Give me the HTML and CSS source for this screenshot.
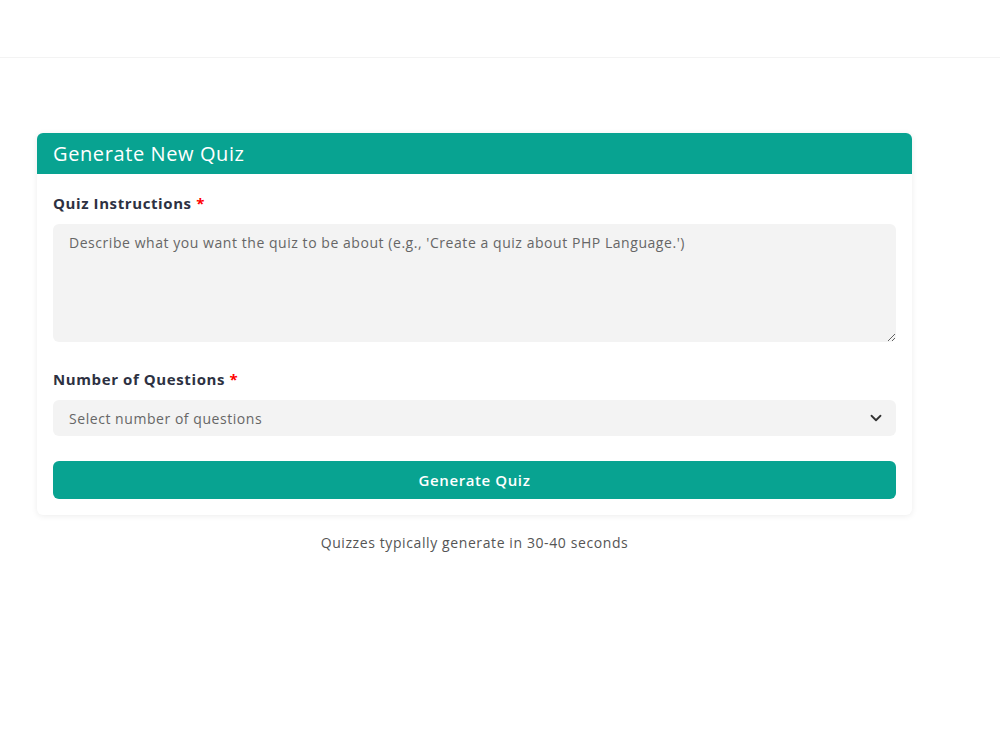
FILE: index.html
```html
<!DOCTYPE html>
<html lang="en">
  <head>
    <meta charset="UTF-8" />
    <meta name="viewport" content="width=device-width, initial-scale=1.0" />
    <title>Generate New Quiz</title>
    <link rel="stylesheet" href="styles.css">
  </head>
  <body>
    <header class="topbar"></header>

    <main class="page">
      <div class="quiz-card">
        <div class="quiz-card-header">
          <h2>Generate New Quiz</h2>
        </div>
        <form class="quiz-form" onsubmit="return false">
          <label for="instructions">Quiz Instructions <span class="req">*</span></label>
          <textarea
            id="instructions"
            placeholder="Describe what you want the quiz to be about (e.g., 'Create a quiz about PHP Language.')"
          ></textarea>

          <label for="count">Number of Questions <span class="req">*</span></label>
          <div class="select-wrap">
            <select id="count">
              <option value="" selected>Select number of questions</option>
              <option value="5">5</option>
              <option value="10">10</option>
              <option value="15">15</option>
              <option value="20">20</option>
            </select>
            <svg class="chevron" width="18" height="18" viewBox="0 0 24 24" fill="none" stroke="#333" stroke-width="2.4" stroke-linecap="round" stroke-linejoin="round"><path d="M6 9l6 6 6-6"/></svg>
          </div>

          <button type="submit">Generate Quiz</button>
        </form>
      </div>
      <p class="hint">Quizzes typically generate in 30-40 seconds</p>
    </main>
  </body>
</html>
```

FILE: styles.css
```css
body {
  font-family: "Open Sans", "Noto Sans", Arial, sans-serif;
  letter-spacing: 0.6px;
  margin: 0;
  background: #fff;
  color: #2d3142;
}
.topbar {
  height: 57px;
  border-bottom: 1px solid #f3f3f3;
}
.page {
  padding: 75px 0 40px 37px;
  width: 875px;
}
.quiz-card {
  background: #fff;
  border-radius: 6px;
  box-shadow: 0 1px 6px rgba(0, 0, 0, 0.08);
  overflow: hidden;
}
.quiz-card-header {
  background: #08a391;
  height: 41px;
  padding: 0 16px;
  display: flex;
  align-items: center;
}
.quiz-card-header h2 {
  margin: 0;
  color: #fff;
  font-size: 20px;
  font-weight: 500;
}
.quiz-form {
  padding: 15px 16px 16px;
  display: flex;
  flex-direction: column;
}
label {
  font-size: 15px;
  font-weight: 700;
  color: #2d3142;
  line-height: 28px;
  margin-bottom: 7px;
}
.req {
  color: #f00;
}
textarea {
  height: 118px;
  box-sizing: border-box;
  border: none;
  border-radius: 6px;
  background: #f3f3f3;
  padding: 9px 16px;
  font-family: inherit;
  font-size: 14px;
  letter-spacing: 0.55px;
  line-height: 20px;
  color: #333;
  margin-bottom: 23px;
  resize: vertical;
}
textarea::placeholder {
  color: #666;
}
.select-wrap {
  position: relative;
  margin-bottom: 25px;
}
select {
  width: 100%;
  height: 36px;
  border: none;
  border-radius: 6px;
  background: #f3f3f3;
  padding: 0 16px;
  font-family: inherit;
  font-size: 14px;
  letter-spacing: 0.55px;
  color: #666;
  appearance: none;
}
.chevron {
  position: absolute;
  right: 11px;
  top: 9px;
  pointer-events: none;
}
button {
  height: 38px;
  border: none;
  border-radius: 6px;
  background: #08a391;
  color: #fff;
  font-family: inherit;
  font-size: 15px;
  font-weight: 600;
  letter-spacing: 0.6px;
  cursor: pointer;
}
.hint {
  text-align: center;
  font-size: 14px;
  color: #555;
  margin: 18px 0 0;
}
```
